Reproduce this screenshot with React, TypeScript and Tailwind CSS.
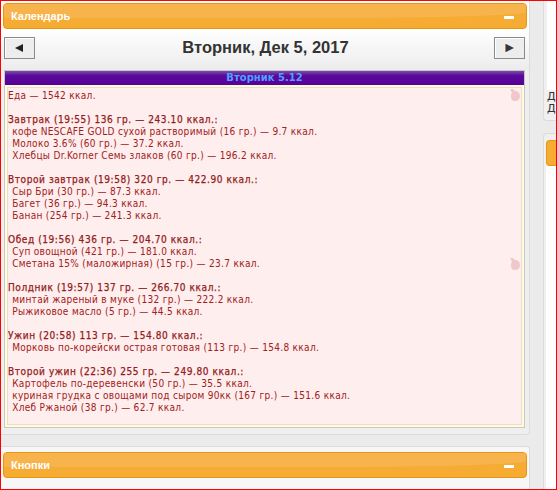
const lines: [string, boolean][] = [
  ['Еда — 1542 ккал.', false],
  ['', false],
  ['Завтрак (19:55) 136 гр. — 243.10 ккал.:', true],
  [' кофе NESCAFE GOLD сухой растворимый (16 гр.) — 9.7 ккал.', false],
  [' Молоко 3.6% (60 гр.) — 37.2 ккал.', false],
  [' Хлебцы Dr.Korner Семь злаков (60 гр.) — 196.2 ккал.', false],
  ['', false],
  ['Второй завтрак (19:58) 320 гр. — 422.90 ккал.:', true],
  [' Сыр Бри (30 гр.) — 87.3 ккал.', false],
  [' Багет (36 гр.) — 94.3 ккал.', false],
  [' Банан (254 гр.) — 241.3 ккал.', false],
  ['', false],
  ['Обед (19:56) 436 гр. — 204.70 ккал.:', true],
  [' Суп овощной (421 гр.) — 181.0 ккал.', false],
  [' Сметана 15% (маложирная) (15 гр.) — 23.7 ккал.', false],
  ['', false],
  ['Полдник (19:57) 137 гр. — 266.70 ккал.:', true],
  [' минтай жареный в муке (132 гр.) — 222.2 ккал.', false],
  [' Рыжиковое масло (5 гр.) — 44.5 ккал.', false],
  ['', false],
  ['Ужин (20:58) 113 гр. — 154.80 ккал.:', true],
  [' Морковь по-корейски острая готовая (113 гр.) — 154.8 ккал.', false],
  ['', false],
  ['Второй ужин (22:36) 255 гр. — 249.80 ккал.:', true],
  [' Картофель по-деревенски (50 гр.) — 35.5 ккал.', false],
  [' куриная грудка с овощами под сыром 90кк (167 гр.) — 151.6 ккал.', false],
  [' Хлеб Ржаной (38 гр.) — 62.7 ккал.', false],
];

function Bar({ title }: { title: string }) {
  return (
    <div className="relative flex h-[26px] items-center justify-between overflow-hidden rounded-[4px] border border-[#e8960f] bg-[#f6ab32] pl-[7px] pr-[12px]">
      <div className="absolute inset-x-0 top-0 h-[14px] rounded-br-[200px_6px] bg-[#f7b44d]" />
      <span className="relative font-['Liberation_Sans',sans-serif] text-[11px] font-bold text-white">{title}</span>
      <span className="relative mt-[2px] h-[3px] w-[10px] bg-white" />
    </div>
  );
}

function Apple() {
  return (
    <svg width="10" height="12" viewBox="0 0 10 12" className="fill-[#efc9c9]">
      <path d="M0 0h3l2 2c3 0 5 2 5 5s-2 5-5 5-4-2-4-5c0-1 0-2 1-3L0 0z" />
    </svg>
  );
}

function ArrowButton({ dir }: { dir: 'left' | 'right' }) {
  return (
    <button
      type="button"
      className="flex h-[22px] w-[31px] items-center justify-center border border-[#8a8a8a] bg-[#ededed] shadow-[inset_1px_1px_0_#fff]"
    >
      <svg width="9" height="8" viewBox="0 0 9 8">
        {dir === 'left' ? (
          <path d="M8 0v8L0 4z" fill="#222" />
        ) : (
          <>
            <path d="M1 0v8l8-4z" fill="#2b3a4a" />
            <path d="M0 0h1v8H0z" fill="#c8822a" />
          </>
        )}
      </svg>
    </button>
  );
}

export default function App() {
  return (
    <div className="flex h-[490px] w-[557px] overflow-hidden border border-[#ff0000] bg-[#ebebeb]">
      <div className="flex w-[529px] shrink-0 flex-col gap-[11px]">
        <section className="h-[434px] rounded-br-[4px] border-b border-r border-[#dcdcdc] bg-[#efefef]">
          <div className="bg-white pl-[2px] pr-[2px] pt-[2px]">
            <Bar title="Календарь" />
          </div>
          <div className="flex h-[41px] items-start justify-between bg-gradient-to-b from-white to-[#ececec] pl-[3px] pr-[4px] pt-[8px]">
            <ArrowButton dir="left" />
            <h2 className="ml-[2px] font-['Liberation_Sans',sans-serif] text-[16.500px] font-bold leading-[20px] text-[#333]">Вторник, Дек 5, 2017</h2>
            <ArrowButton dir="right" />
          </div>
          <div className="ml-[3px] mr-[4px] h-[358px] border border-[#c8c8c8] bg-[#fffdd8]">
            <div className="h-[14px] bg-gradient-to-b from-[#7a4aa6] via-[#5a0a9a] via-30% to-[#58009a] text-center font-['DejaVu_Sans',sans-serif] text-[10px] font-bold leading-[14px] text-[#4da0ff]">
              Вторник 5.12
            </div>
            <div className="relative mx-[2px] mt-[2px] h-[338px] border border-[#e8dcd8] bg-[#ffeeee] pt-[2px] font-['DejaVu_Sans_Condensed','DejaVu_Sans',sans-serif] text-[10px] leading-[12px] text-[#9f2020] [font-stretch:condensed]">
              {lines.map(([text, bold], i) => (
                <div
                  key={i}
                  className={`h-[12px] whitespace-pre ${bold ? 'tracking-[0.58px] text-[#941c1c] [-webkit-text-stroke:0.25px_#941c1c]' : 'tracking-[0.31px]'} ${text.startsWith(' ') ? 'pl-[1px]' : ''}`}
                >
                  {text}
                </div>
              ))}
              <div className="absolute right-[1px] top-[1px]"><Apple /></div>
              <div className="absolute right-[1px] top-[170px]"><Apple /></div>
            </div>
          </div>
        </section>
        <section className="flex-1 rounded-tr-[4px] border-r border-t border-[#dcdcdc] bg-[#f7f7f7] pl-[2px] pr-[2px] pt-[5px]">
          <Bar title="Кнопки" />
        </section>
      </div>
      <div className="ml-[13px] flex min-w-0 flex-1 flex-col gap-[12px]">
        <section className="h-[120px] rounded-bl-[4px] border-b border-l border-[#dcdcdc] bg-[#f0f0f0] pl-[3px]">
          <div className="h-[89px] bg-white" />
          <p className="mt-[1px] font-['DejaVu_Sans',sans-serif] text-[11px] leading-[12px] text-[#333]">Д<br />Д</p>
        </section>
        <section className="flex-1 rounded-tl-[4px] border-l border-t border-[#dcdcdc] bg-[#f0f0f0] pl-[2px] pt-[6px]">
          <div className="h-[26px] rounded-l-[4px] border border-r-0 border-[#e8960f] bg-[#f6ab32]" />
          <div className="h-full bg-white" />
        </section>
      </div>
    </div>
  );
}
